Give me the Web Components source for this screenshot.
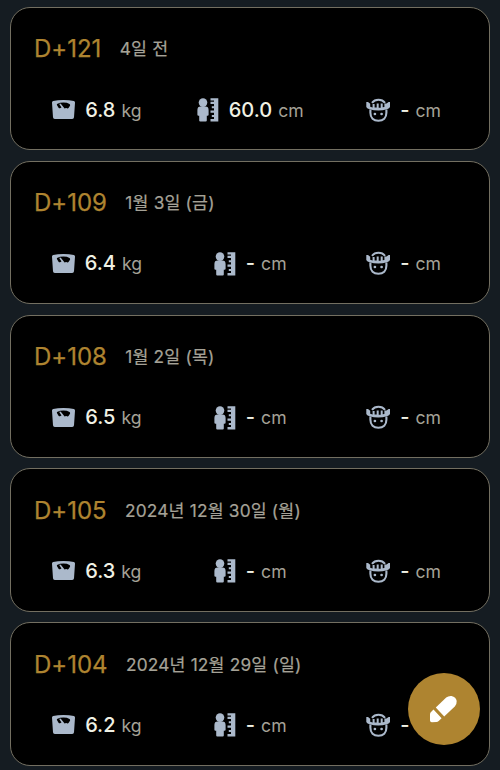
<!DOCTYPE html>
<html lang="ko">
<head>
<meta charset="utf-8">
<title>성장 기록</title>
<style>
html, body { margin: 0; height: 770px; overflow: hidden; background: #151c22; }
body { font-family: Inter, "Noto Sans CJK KR", sans-serif; }
</style>
</head>
<body>
<growth-list>
  <growth-card day="D+121" date="4일 전" weight="6.8" height="60.0" head="-"></growth-card>
  <growth-card day="D+109" date="1월 3일 (금)" weight="6.4" height="-" head="-"></growth-card>
  <growth-card day="D+108" date="1월 2일 (목)" weight="6.5" height="-" head="-"></growth-card>
  <growth-card day="D+105" date="2024년 12월 30일 (월)" weight="6.3" height="-" head="-"></growth-card>
  <growth-card day="D+104" date="2024년 12월 29일 (일)" weight="6.2" height="-" head="-"></growth-card>
</growth-list>
<edit-button></edit-button>
<script>
const ICONS = {
  scale: `<svg width="23" height="24" viewBox="0 0 23 24"><path fill="currentColor" fill-rule="evenodd" d="M0 4.8Q-.1 3.5 1.2 3.1Q5.5 1.9 11.5 1.9T21.8 3.1Q23.1 3.5 23 4.8L22 19.2Q21.9 20.9 20.2 20.9H2.8Q1.1 20.9 1 19.2ZM5 6Q4.7 6.8 5.2 7.5L6.7 9.9Q7.2 10.5 8 10.2L9.5 9.6L7.5 6.4Q7.3 5.8 7.9 5.6Q8.6 5.4 9 5.9L12.6 10.6Q14 9.4 15 10.3Q16 10.8 16.5 10L18 7.7Q18.4 6.6 17.5 5.9Q15.2 4.6 11.5 4.6T5 6Z"/></svg>`,
  ruler: `<svg width="22" height="24" viewBox="0 0 22 24"><g fill="currentColor"><circle cx="6" cy="4.6" r="4.3"/><path d="M3.6 8.6H8.4Q11.6 8.6 11.6 12V16.7Q11.6 17.8 10.5 17.8H9.8V22.4Q9.8 23.5 8.7 23.5H3.3Q2.2 23.5 2.2 22.4V17.8H1.5Q.4 17.8 .4 16.7V12Q.4 8.6 3.6 8.6Z"/><path d="M13.5 .3H21.3V23.5H13.5V21H17V19H14.8V17H17V14.8H13.5V12.5H17V10.2H14.8V8.2H17V5.9H13.5V3.7H17V2.5H13.5Z"/></g></svg>`,
  head: `<svg width="24" height="25" viewBox="0 0 24 25" fill="none" stroke="currentColor"><path stroke-width="2" d="M6 4.8Q8.3 1.8 12.5 1.8T19 4.8"/><path stroke-width="2.1" d="M4.4 11.5V14.8C4.4 19.8 7.5 22.7 12.4 22.7S20.4 19.8 20.4 14.8V11.5"/><path fill="currentColor" stroke="none" d="M.3 4H2L4.2 5.8V8.8L6.6 9.4V6H8.6V9.6H10.7V5.4H12.7V9.7H14.7V5.4H16.7V9.3L18.4 9V5.4H20.5L22.6 4H24V9Q23.5 10.6 21 11.3Q12.4 13.7 3.4 11.3Q.7 10.6 .3 9Z"/><circle cx="8.9" cy="16" r="1.35" fill="currentColor" stroke="none"/><circle cx="15.6" cy="16" r="1.35" fill="currentColor" stroke="none"/></svg>`
};

customElements.define('growth-list', class extends HTMLElement {
  constructor() {
    super();
    this.attachShadow({mode: 'open'}).innerHTML = `
      <style>:host { display: flex; flex-direction: column; gap: 10.4px; padding: 7px 10px 0; }</style><slot></slot>`;
  }
});

customElements.define('growth-metric', class extends HTMLElement {
  connectedCallback() {
    const value = this.getAttribute('value');
    this.attachShadow({mode: 'open'}).innerHTML = `
      <style>
        :host { display: flex; flex: 1 1 0; align-items: center; justify-content: center; min-width: 0; height: 30px; white-space: nowrap; }
        svg { display: block; flex: none; color: #abb9cb; margin-right: 10px; }
        .text { display: flex; align-items: baseline; gap: 6px; line-height: 30px; }
        .value { font-size: 20px; font-weight: 500; color: #f0f1e4; }
        .unit { font-size: 17.6px; color: #a5a297; }
      </style>
      ${ICONS[this.getAttribute('icon')]}
      <div class="text"><span class="value">${value}</span><span class="unit"><slot></slot></span></div>`;
  }
});

customElements.define('growth-card', class extends HTMLElement {
  connectedCallback() {
    const a = n => this.getAttribute(n);
    this.attachShadow({mode: 'open'}).innerHTML = `
      <style>
        :host { display: block; box-sizing: border-box; flex: none; width: 480px; height: 143.4px; padding: 25.4px 8.8px 0 9.2px; border: 1.4px solid #736f61; border-radius: 20px; background: #000; }
        header { display: flex; align-items: center; gap: 18.3px; height: 32px; padding-left: 13.7px; line-height: 32px; white-space: nowrap; }
        .day { font-size: 24px; letter-spacing: .03px; -webkit-text-stroke: .25px #ae8430; color: #ae8430; }
        .date { font-size: 17.3px; letter-spacing: .18px; -webkit-text-stroke: .2px #a5a297; color: #a5a297; }
        .metrics { display: flex; margin-top: 29.7px; }
      </style>
      <header><span class="day">${a('day')}</span><span class="date">${a('date')}</span></header>
      <div class="metrics">
        <growth-metric icon="scale" value="${a('weight')}">kg</growth-metric>
        <growth-metric icon="ruler" value="${a('height')}">cm</growth-metric>
        <growth-metric icon="head" value="${a('head')}">cm</growth-metric>
      </div>`;
  }
});

customElements.define('edit-button', class extends HTMLElement {
  constructor() {
    super();
    this.attachShadow({mode: 'open'}).innerHTML = `
      <style>
        :host { position: fixed; left: 408px; top: 673px; width: 72px; height: 72px; border-radius: 50%; background: #ae8430; }
        svg { display: block; }
      </style>
      <svg width="72" height="72" viewBox="0 0 72 72" fill="#fff"><path d="M27.8 34.4L38.2 24.6Q40.4 22.7 43.5 23Q48 23.9 48.7 28Q48.9 31.2 46.8 33.5L36.2 43.5Z"/><path d="M25.5 36.5L33.6 45.3L30.7 47.9Q29.7 48.8 28.4 48.9L23.8 49.2Q22.1 49.2 22 47.5V41.4Q22 40 23 39Z"/></svg>`;
  }
});
</script>
</body>
</html>
